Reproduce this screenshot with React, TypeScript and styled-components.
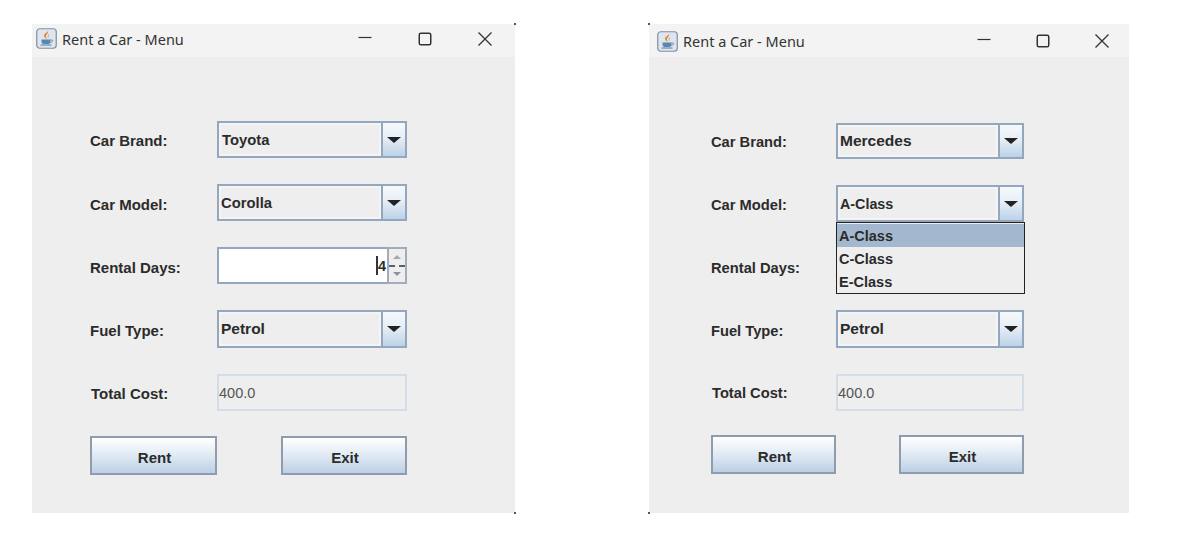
import styled, { createGlobalStyle } from "styled-components";

const COLOR_PANEL = "#eeeeee";
const COLOR_TEXT = "#2b2b2b";
const COLOR_BORDER = "#93a7bf";

const GlobalStyle = createGlobalStyle`
  html, body {
    margin: 0;
    background: #ffffff;
  }
`;

const Page = styled.div`
  box-sizing: border-box;
  width: 1185px;
  height: 557px;
  padding: 24px 0 0 32px;
  display: flex;
  gap: 134px;
  align-items: flex-start;
  background: #ffffff;
  overflow: hidden;
`;

const Win = styled.div<{ $width: number; $side: "left" | "right" }>`
  position: relative;
  width: ${(p) => p.$width}px;
  height: 489px;
  background: ${COLOR_PANEL};
  font-family: "Liberation Sans", Arial, sans-serif;
  color: ${COLOR_TEXT};

  &::before,
  &::after {
    content: "";
    position: absolute;
    width: 2px;
    height: 2px;
    background: #555555;
    ${(p) => (p.$side === "left" ? "right: -1px;" : "left: -1px;")}
  }
  &::before {
    top: -1px;
  }
  &::after {
    bottom: -1px;
  }
`;

const TitleBar = styled.div<{ $pt: number; $pb: number }>`
  box-sizing: border-box;
  height: 33px;
  padding: ${(p) => p.$pt}px 0 ${(p) => p.$pb}px;
  background: #f3f3f3;
  display: flex;
  align-items: center;
`;

const TitleIcon = styled.svg<{ $left: number }>`
  margin-left: ${(p) => p.$left}px;
  width: 21px;
  height: 21px;
  flex: none;
`;

const TitleText = styled.span`
  margin-left: 5px;
  font-family: "Noto Sans", sans-serif;
  font-size: 14.5px;
  color: #333333;
  white-space: nowrap;
`;

const Controls = styled.div<{ $pad: number; $gap: number }>`
  margin-left: auto;
  padding-right: ${(p) => p.$pad}px;
  display: flex;
  gap: ${(p) => p.$gap}px;
  align-items: center;
`;

const ControlIcon = styled.svg`
  width: 16px;
  height: 16px;
  fill: none;
  stroke: #333333;
`;

const Form = styled.div<{ $top: number; $left: number; $right: number; $labelSize: number }>`
  padding: ${(p) => p.$top}px ${(p) => p.$right}px 0 ${(p) => p.$left}px;
  display: flex;
  flex-direction: column;
  font-size: ${(p) => p.$labelSize}px;
`;

const Row = styled.div<{ $mt: number; $h?: number }>`
  display: flex;
  align-items: center;
  margin-top: ${(p) => p.$mt}px;
  height: ${(p) => p.$h ?? 37}px;
  position: relative;
`;

const Label = styled.span<{ $width: number; $dy: number; $indent?: number }>`
  flex: none;
  box-sizing: border-box;
  width: ${(p) => p.$width}px;
  padding-left: ${(p) => p.$indent ?? 0}px;
  padding-top: ${(p) => p.$dy}px;
  font-weight: 700;
  white-space: nowrap;
`;

const Combo = styled.div`
  flex: 1;
  box-sizing: border-box;
  height: 100%;
  display: flex;
  border: 2px solid ${COLOR_BORDER};
`;

const ComboValue = styled.div<{ $indent: number; $size?: number }>`
  flex: 1;
  box-sizing: border-box;
  display: flex;
  align-items: center;
  padding-left: ${(p) => p.$indent}px;
  border: 2px solid #f4f4f4;
  font-size: ${(p) => p.$size ?? 14.8}px;
  font-weight: 700;
`;

const ArrowButton = styled.div`
  flex: none;
  width: 22px;
  display: flex;
  align-items: center;
  justify-content: center;
  border-left: 2px solid ${COLOR_BORDER};
  background: linear-gradient(#f6f9fc, #e6eef6 45%, #bcd2e8);
`;

const Arrow = styled.div`
  width: 0;
  height: 0;
  border-left: 7px solid transparent;
  border-right: 7px solid transparent;
  border-top: 6px solid #222222;
`;

const SpinnerField = styled.div`
  flex: 1;
  display: flex;
  height: 100%;
`;

const SpinnerInput = styled.div`
  flex: 1;
  box-sizing: border-box;
  display: flex;
  align-items: center;
  justify-content: flex-end;
  padding-right: 1px;
  background: #ffffff;
  border: 2px solid ${COLOR_BORDER};
  border-right: none;
  font-size: 14.5px;
  font-weight: 700;
`;

const Caret = styled.span`
  width: 2px;
  height: 19px;
  background: #333333;
`;

const SpinnerButtons = styled.div`
  flex: none;
  width: 20px;
  box-sizing: border-box;
  display: flex;
  flex-direction: column;
  border: 2px solid #a3adb9;
`;

const SpinnerButton = styled.div<{ $down?: boolean }>`
  flex: 1;
  display: flex;
  align-items: center;
  justify-content: center;
  background: #eeeeee;
  ${(p) => (p.$down ? "border-top: 2px dashed #59626d;" : "")}

  &::after {
    content: "";
    width: 0;
    height: 0;
    border-left: 4px solid transparent;
    border-right: 4px solid transparent;
    ${(p) => (p.$down ? "border-top: 4px solid #8b929b;" : "border-bottom: 4px solid #a4a9af;")}
  }
`;

const ReadOnlyField = styled.div`
  flex: 1;
  box-sizing: border-box;
  height: 100%;
  display: flex;
  align-items: center;
  border: 2px solid #d3dde8;
  font-size: 14.5px;
  color: #555555;
`;

const ButtonRow = styled.div<{ $mt: number }>`
  display: flex;
  justify-content: space-between;
  margin-top: ${(p) => p.$mt}px;
`;

const ActionButton = styled.div<{ $width: number }>`
  box-sizing: border-box;
  width: ${(p) => p.$width}px;
  height: 39px;
  display: flex;
  align-items: center;
  justify-content: center;
  padding: 3px 0 0 2px;
  border: 2px solid #8f9cad;
  background: linear-gradient(#ffffff, #e3ecf5 45%, #bcd0e5);
  font-size: 15px;
  font-weight: 700;
`;

// open combo list, lies over the Rental Days row
const Popup = styled.div`
  position: absolute;
  top: 100%;
  right: -1px;
  width: 189px;
  box-sizing: border-box;
  height: 72px;
  padding-top: 1px;
  background: ${COLOR_PANEL};
  border: 1.5px solid #222222;
  z-index: 2;
`;

const PopupItem = styled.div<{ $selected?: boolean }>`
  height: 23px;
  display: flex;
  align-items: center;
  padding-left: 2px;
  font-size: 14.5px;
  font-weight: 700;
  background: ${(p) => (p.$selected ? "#a3b8cf" : "transparent")};
`;

const JavaIcon = ({ left }: { left: number }) => (
  <TitleIcon $left={left} viewBox="0 0 21 21">
    <rect x="0.75" y="0.75" width="19.5" height="19.5" rx="3" fill="#dfe5ec" stroke="#7f8fa3" strokeWidth="1.2" />
    <path d="M12 3c1 2.4-3 3.4-1.8 6.4.3.8 1 1.2 1 1.2-2-.3-3.6-1.7-3-3.7.5-1.6 3.2-2.2 3.8-3.9z" fill="#e0813a" />
    <path d="M13.2 6c-1.2 1.2-2 2.2-1 4.2-.1-1.5.8-2.7 1-4.2z" fill="#e0813a" />
    <path d="M5.5 11.5h9v2.2c0 1.6-1.4 2.3-3 2.3h-3c-1.6 0-3-.7-3-2.3z" fill="#5c86ad" />
    <path d="M14.5 12h1.6c1 0 1 2-1.8 2.4" fill="none" stroke="#5c86ad" strokeWidth="0.9" />
    <path d="M4.5 17h11" stroke="#5c86ad" strokeWidth="1.1" />
  </TitleIcon>
);

const WindowControls = ({ pad, gap }: { pad: number; gap: number }) => (
  <Controls $pad={pad} $gap={gap}>
    <ControlIcon viewBox="0 0 16 16" strokeWidth="1.2">
      <path d="M1.5 6.5h13" />
    </ControlIcon>
    <ControlIcon viewBox="0 0 16 16" strokeWidth="1.5">
      <rect x="2.25" y="2.25" width="11.5" height="11.5" rx="1.6" />
    </ControlIcon>
    <ControlIcon viewBox="0 0 16 16" strokeWidth="1.3">
      <path d="M1.5 1.5l13 13M14.5 1.5l-13 13" />
    </ControlIcon>
  </Controls>
);

const ComboBox = ({ value, indent = 0, size }: { value: string; indent?: number; size?: number }) => (
  <Combo>
    <ComboValue $indent={indent} $size={size}>
      {value}
    </ComboValue>
    <ArrowButton>
      <Arrow />
    </ArrowButton>
  </Combo>
);

const App = () => {
  return (
    <Page>
      <GlobalStyle />
      <Win $width={483} $side="left">
        <TitleBar $pt={0} $pb={4}>
          <JavaIcon left={4} />
          <TitleText>Rent a Car - Menu</TitleText>
          <WindowControls pad={22} gap={44} />
        </TitleBar>
        <Form $top={64} $left={58} $right={108} $labelSize={15}>
          <Row $mt={0}>
            <Label $width={127} $dy={1}>Car Brand:</Label>
            <ComboBox value="Toyota" indent={1} />
          </Row>
          <Row $mt={26}>
            <Label $width={127} $dy={3}>Car Model:</Label>
            <ComboBox value="Corolla" />
          </Row>
          <Row $mt={26}>
            <Label $width={127} $dy={3}>Rental Days:</Label>
            <SpinnerField>
              <SpinnerInput>
                <Caret />4
              </SpinnerInput>
              <SpinnerButtons>
                <SpinnerButton />
                <SpinnerButton $down />
              </SpinnerButtons>
            </SpinnerField>
          </Row>
          <Row $mt={26} $h={38}>
            <Label $width={127} $dy={3}>Fuel Type:</Label>
            <ComboBox value="Petrol" size={15.5} />
          </Row>
          <Row $mt={26}>
            <Label $width={127} $dy={1} $indent={1}>Total Cost:</Label>
            <ReadOnlyField>400.0</ReadOnlyField>
          </Row>
          <ButtonRow $mt={25}>
            <ActionButton $width={127}>Rent</ActionButton>
            <ActionButton $width={126}>Exit</ActionButton>
          </ButtonRow>
        </Form>
      </Win>
      <Win $width={480} $side="right">
        <TitleBar $pt={1} $pb={0}>
          <JavaIcon left={8} />
          <TitleText>Rent a Car - Menu</TitleText>
          <WindowControls pad={19} gap={43} />
        </TitleBar>
        <Form $top={66} $left={62} $right={105} $labelSize={14.7}>
          <Row $mt={0} $h={36}>
            <Label $width={125} $dy={2}>Car Brand:</Label>
            <ComboBox value="Mercedes" size={15.5} />
          </Row>
          <Row $mt={26}>
            <Label $width={125} $dy={3}>Car Model:</Label>
            <ComboBox value="A-Class" size={14.3} />
            <Popup>
              <PopupItem $selected>A-Class</PopupItem>
              <PopupItem>C-Class</PopupItem>
              <PopupItem>E-Class</PopupItem>
            </Popup>
          </Row>
          <Row $mt={26}>
            <Label $width={125} $dy={3}>Rental Days:</Label>
          </Row>
          <Row $mt={25} $h={38}>
            <Label $width={125} $dy={3}>Fuel Type:</Label>
            <ComboBox value="Petrol" size={15.5} />
          </Row>
          <Row $mt={26}>
            <Label $width={125} $dy={1} $indent={1}>Total Cost:</Label>
            <ReadOnlyField>400.0</ReadOnlyField>
          </Row>
          <ButtonRow $mt={24}>
            <ActionButton $width={125}>Rent</ActionButton>
            <ActionButton $width={125}>Exit</ActionButton>
          </ButtonRow>
        </Form>
      </Win>
    </Page>
  );
};

export default App;
